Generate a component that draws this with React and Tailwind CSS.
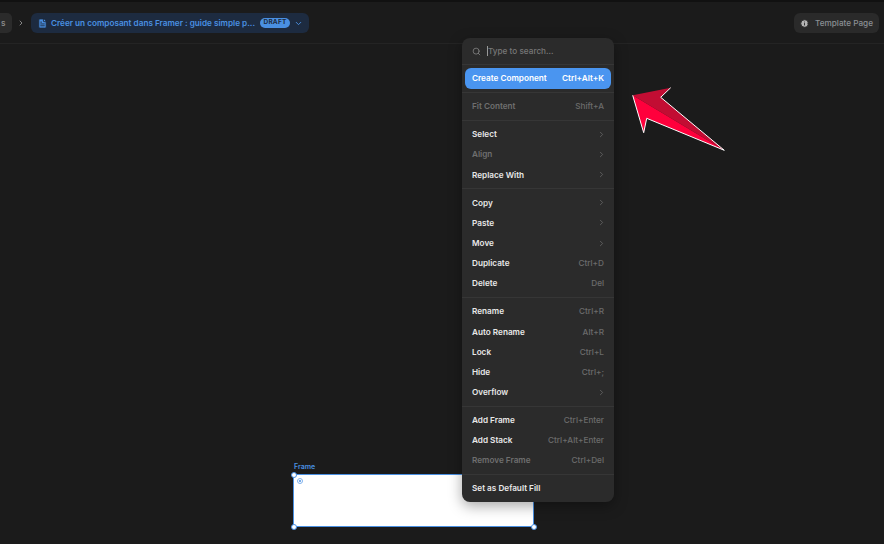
import { ChevronDown, ChevronRight, FileText, Info, Search } from "lucide-react";

const groups = [
  [{ label: "Fit Content", hint: "Shift+A", off: true }],
  [
    { label: "Select", sub: true },
    { label: "Align", sub: true, off: true },
    { label: "Replace With", sub: true },
  ],
  [
    { label: "Copy", sub: true },
    { label: "Paste", sub: true },
    { label: "Move", sub: true },
    { label: "Duplicate", hint: "Ctrl+D" },
    { label: "Delete", hint: "Del" },
  ],
  [
    { label: "Rename", hint: "Ctrl+R" },
    { label: "Auto Rename", hint: "Alt+R" },
    { label: "Lock", hint: "Ctrl+L" },
    { label: "Hide", hint: "Ctrl+;" },
    { label: "Overflow", sub: true },
  ],
  [
    { label: "Add Frame", hint: "Ctrl+Enter" },
    { label: "Add Stack", hint: "Ctrl+Alt+Enter" },
    { label: "Remove Frame", hint: "Ctrl+Del", off: true },
  ],
  [{ label: "Set as Default Fill" }],
];

function MenuRow({ item }) {
  return (
    <div className="flex h-[20.2px] items-center justify-between px-[10px]">
      <span className={item.off ? "text-[#6f6f6f]" : "text-[#e8e8e8]"}>{item.label}</span>
      {item.hint && <span className="font-medium text-[#6b6b6b]">{item.hint}</span>}
      {item.sub && <ChevronRight className="mr-[-2px] size-[9px] text-[#6b6b6b]" strokeWidth={2} />}
    </div>
  );
}

function Handle({ className }) {
  return <div className={`absolute size-[6px] rounded-full border border-[#4a90e2] bg-white ${className}`} />;
}

export default function App() {
  return (
    <div className="relative h-[544px] w-[884px] overflow-hidden bg-[#1b1b1b] font-['Inter',sans-serif] text-[8.2px] font-semibold">
      <div className="h-[2px] bg-[#111111]" />

      {/* top bar */}
      <div className="flex h-[42px] items-center justify-between border-b border-[#242424] pt-[1px] pr-[5px]">
        <div className="flex items-center">
          <div className="flex h-[20px] w-[12px] items-center rounded-r-[5px] bg-[#2b2b2b] pl-[1px] text-[#8a8a8a]">s</div>
          <ChevronRight className="mx-[5px] size-[8px] text-[#999999]" strokeWidth={2.5} />
          <div className="ml-[1px] flex h-[20px] w-[278px] items-center rounded-[6px] bg-[#1d2b40] pl-[6px] text-[#4a90e2]">
            <FileText className="size-[11px] fill-[#4a90e2] text-[#1d2b40]" />
            <span className="ml-[3px] w-[203px] whitespace-nowrap">Créer un composant dans Framer : guide simple p...</span>
            <span className="ml-[6px] flex h-[10px] w-[30px] items-center justify-center rounded-full bg-[#4a90e2] text-[6.5px] font-bold tracking-[0.2px] text-[#1d2b40]">DRAFT</span>
            <ChevronDown className="ml-[4px] size-[9px]" strokeWidth={2.5} />
          </div>
        </div>
        <div className="flex h-[20px] w-[85px] items-center rounded-[6px] bg-[#2a2a2a] pl-[6px] font-medium text-[#8b8f94]">
          <Info className="size-[9px] fill-[#b5b5b5] text-[#2a2a2a]" strokeWidth={2.5} />
          <span className="ml-[6px] whitespace-nowrap">Template Page</span>
        </div>
      </div>

      {/* frame on the canvas */}
      <div className="absolute top-[474px] left-[293px] h-[53px] w-[241px] border border-[#4a90e2] bg-white">
        <span className="absolute top-[-13px] left-0 text-[7px] text-[#4a90e2]">Frame</span>
        <div className="absolute top-[3px] left-[3px] flex size-[6px] items-center justify-center rounded-full border border-[#7fb2ee]">
          <div className="size-[2px] rounded-full bg-[#4a90e2]" />
        </div>
        <Handle className="top-[-3.5px] left-[-3.5px]" />
        <Handle className="bottom-[-3.5px] left-[-3.5px]" />
        <Handle className="right-[-3.5px] bottom-[-3.5px]" />
      </div>

      {/* context menu */}
      <div className="absolute top-[38px] left-[462px] flex h-[464px] w-[152px] flex-col rounded-[8px] bg-[#2b2b2b] shadow-[0_4px_14px_rgba(0,0,0,0.35)]">
        <div className="flex h-[27px] shrink-0 items-center border-b border-[#363636] pl-[10px] font-medium text-[#777777]">
          <Search className="size-[9px] text-[#8a8a8a]" strokeWidth={2} />
          <span className="ml-[6px] h-[10px] w-px bg-[#999999]" />
          <span>Type to search...</span>
        </div>
        <div className="h-[28px] shrink-0 border-b border-[#363636] px-[3px] pt-[3px]">
          <div className="flex h-[21px] w-full items-center justify-between rounded-[6px] bg-[#4a95f0] px-[7px] text-white">
            <span>Create Component</span>
            <span>Ctrl+Alt+K</span>
          </div>
        </div>
        {groups.map((group, i) => (
          <div key={i} className="border-b border-[#363636] py-[3.4px] last:border-b-0">
            {group.map((item) => (
              <MenuRow key={item.label} item={item} />
            ))}
          </div>
        ))}
      </div>

      {/* red arrow */}
      <svg className="absolute top-[85px] left-[630px]" width="97" height="68" viewBox="0 0 97 68" fill="none">
        <path d="M2.7 10.3 40.7 2.7 30.7 12.3 94.3 65.3Z" fill="#c20d33" />
        <path d="M2.7 10.3 94.3 65.3 16.7 33.3 13.7 47.7Z" fill="#ff003c" />
        <path d="M40.7 2.7 30.7 12.3 94.3 65.3 16.7 33.3 13.7 47.7 2.7 10.3" stroke="#ffffff" strokeWidth="1" />
      </svg>
    </div>
  );
}
